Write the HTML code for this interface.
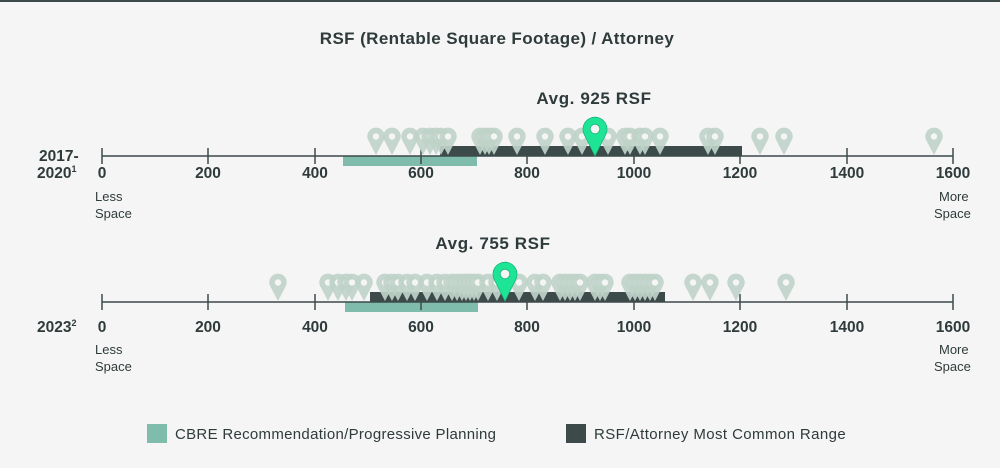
<!DOCTYPE html>
<html><head><style>
html,body{margin:0;padding:0;background:#f5f5f5;}
svg{display:block;font-family:"Liberation Sans",sans-serif;}
</style></head><body>
<svg width="1000" height="468" viewBox="0 0 1000 468" xmlns="http://www.w3.org/2000/svg">
<rect width="1000" height="468" fill="#f5f5f5"/>
<rect width="1000" height="2" fill="#3d4a4a"/>
<defs>
<g id="p"><path d="M0,0 L-7.6,-14.5 A8.7,8.7 0 1 1 7.6,-14.5 Z" fill="#bfd3c9" fill-opacity="0.92"/><circle cx="0" cy="-18.5" r="3.2" fill="#f5f5f5"/></g>
<g id="g"><path d="M0,0 L-10.5,-21 A12,12 0 1 1 10.5,-21 Z" fill="#1ee596" stroke="#17b37a" stroke-width="0.8"/><circle cx="0" cy="-27" r="4.8" fill="#f5f5f5" stroke="#17b37a" stroke-width="0.8"/></g>
</defs>
<text x="497" y="44" text-anchor="middle" font-size="17" font-weight="bold" fill="#2f3b3b" letter-spacing="0.4">RSF (Rentable Square Footage) / Attorney</text>

<!-- Row 1 -->
<text x="594" y="104" text-anchor="middle" font-size="17" font-weight="bold" fill="#2f3b3b" letter-spacing="0.6">Avg. 925 RSF</text>
<rect x="440" y="146" width="302" height="10" fill="#3d4a4a"/>
<rect x="343" y="156" width="134" height="10" fill="#80bcab"/>
<line x1="102" y1="156" x2="953" y2="156" stroke="#3d4a4a" stroke-width="1.5"/>
<g stroke="#3d4a4a" stroke-width="1.5">
<line x1="102" y1="148" x2="102" y2="164"/><line x1="208" y1="148" x2="208" y2="164"/><line x1="315" y1="148" x2="315" y2="164"/><line x1="421" y1="148" x2="421" y2="164"/><line x1="527" y1="148" x2="527" y2="164"/><line x1="634" y1="148" x2="634" y2="164"/><line x1="740" y1="148" x2="740" y2="164"/><line x1="847" y1="148" x2="847" y2="164"/><line x1="953" y1="148" x2="953" y2="164"/>
</g>
<g transform="translate(0,155)">
<use href="#p" x="376"/><use href="#p" x="392"/><use href="#p" x="410"/><use href="#p" x="423"/><use href="#p" x="430"/><use href="#p" x="436"/><use href="#p" x="441"/><use href="#p" x="448"/><use href="#p" x="480"/><use href="#p" x="485"/><use href="#p" x="489"/><use href="#p" x="494"/><use href="#p" x="517"/><use href="#p" x="545"/><use href="#p" x="568"/><use href="#p" x="582"/><use href="#p" x="608"/><use href="#p" x="625"/><use href="#p" x="630"/><use href="#p" x="640"/><use href="#p" x="645"/><use href="#p" x="660"/><use href="#p" x="708"/><use href="#p" x="715"/><use href="#p" x="760"/><use href="#p" x="784"/><use href="#p" x="934"/>
<use href="#g" x="595" y="1"/>
</g>
<g font-size="15.5" font-weight="bold" fill="#2f3b3b" text-anchor="middle">
<text x="102" y="178">0</text><text x="208" y="178">200</text><text x="315" y="178">400</text><text x="421" y="178">600</text><text x="527" y="178">800</text><text x="634" y="178">1000</text><text x="740" y="178">1200</text><text x="847" y="178">1400</text><text x="953" y="178">1600</text>
</g>
<text x="39" y="161" font-size="15.5" font-weight="bold" fill="#2f3b3b">2017-</text>
<text x="37" y="178" font-size="15.5" font-weight="bold" fill="#2f3b3b">2020<tspan font-size="9" dy="-6">1</tspan></text>
<g font-size="13" fill="#2f3b3b"><text x="95" y="201">Less</text><text x="95" y="218">Space</text><text x="939" y="201">More</text><text x="934" y="218">Space</text></g>

<!-- Row 2 -->
<text x="493" y="249" text-anchor="middle" font-size="17" font-weight="bold" fill="#2f3b3b" letter-spacing="0.6">Avg. 755 RSF</text>
<rect x="370" y="292" width="295" height="10" fill="#3d4a4a"/>
<rect x="345" y="302" width="133" height="10" fill="#80bcab"/>
<line x1="102" y1="302" x2="953" y2="302" stroke="#3d4a4a" stroke-width="1.5"/>
<g stroke="#3d4a4a" stroke-width="1.5">
<line x1="102" y1="294" x2="102" y2="310"/><line x1="208" y1="294" x2="208" y2="310"/><line x1="315" y1="294" x2="315" y2="310"/><line x1="421" y1="294" x2="421" y2="310"/><line x1="527" y1="294" x2="527" y2="310"/><line x1="634" y1="294" x2="634" y2="310"/><line x1="740" y1="294" x2="740" y2="310"/><line x1="847" y1="294" x2="847" y2="310"/><line x1="953" y1="294" x2="953" y2="310"/>
</g>
<g transform="translate(0,301)">
<use href="#p" x="278"/><use href="#p" x="328"/><use href="#p" x="338"/><use href="#p" x="346"/><use href="#p" x="352"/><use href="#p" x="364"/><use href="#p" x="385"/><use href="#p" x="392"/><use href="#p" x="398"/><use href="#p" x="407"/><use href="#p" x="415"/><use href="#p" x="427"/><use href="#p" x="437"/><use href="#p" x="445"/><use href="#p" x="452"/><use href="#p" x="457"/><use href="#p" x="462"/><use href="#p" x="466"/><use href="#p" x="470"/><use href="#p" x="474"/><use href="#p" x="478"/><use href="#p" x="488"/><use href="#p" x="497"/><use href="#p" x="519"/><use href="#p" x="535"/><use href="#p" x="543"/><use href="#p" x="560"/><use href="#p" x="565"/><use href="#p" x="570"/><use href="#p" x="575"/><use href="#p" x="580"/><use href="#p" x="595"/><use href="#p" x="600"/><use href="#p" x="605"/><use href="#p" x="630"/><use href="#p" x="635"/><use href="#p" x="640"/><use href="#p" x="645"/><use href="#p" x="650"/><use href="#p" x="655"/><use href="#p" x="693"/><use href="#p" x="710"/><use href="#p" x="736"/><use href="#p" x="786"/>
<use href="#g" x="505" y="0"/>
</g>
<g font-size="15.5" font-weight="bold" fill="#2f3b3b" text-anchor="middle">
<text x="102" y="332">0</text><text x="208" y="332">200</text><text x="315" y="332">400</text><text x="421" y="332">600</text><text x="527" y="332">800</text><text x="634" y="332">1000</text><text x="740" y="332">1200</text><text x="847" y="332">1400</text><text x="953" y="332">1600</text>
</g>
<text x="37" y="332" font-size="15.5" font-weight="bold" fill="#2f3b3b">2023<tspan font-size="9" dy="-6">2</tspan></text>
<g font-size="13" fill="#2f3b3b"><text x="95" y="354">Less</text><text x="95" y="371">Space</text><text x="939" y="354">More</text><text x="934" y="371">Space</text></g>

<!-- Legend -->
<rect x="147" y="424" width="20" height="19" fill="#80bcab"/>
<text x="175" y="439" font-size="15" fill="#2f3b3b" letter-spacing="0.3">CBRE Recommendation/Progressive Planning</text>
<rect x="566" y="424" width="20" height="19" fill="#3d4a4a"/>
<text x="594" y="439" font-size="15" fill="#2f3b3b" letter-spacing="0.4">RSF/Attorney Most Common Range</text>
</svg>
</body></html>
